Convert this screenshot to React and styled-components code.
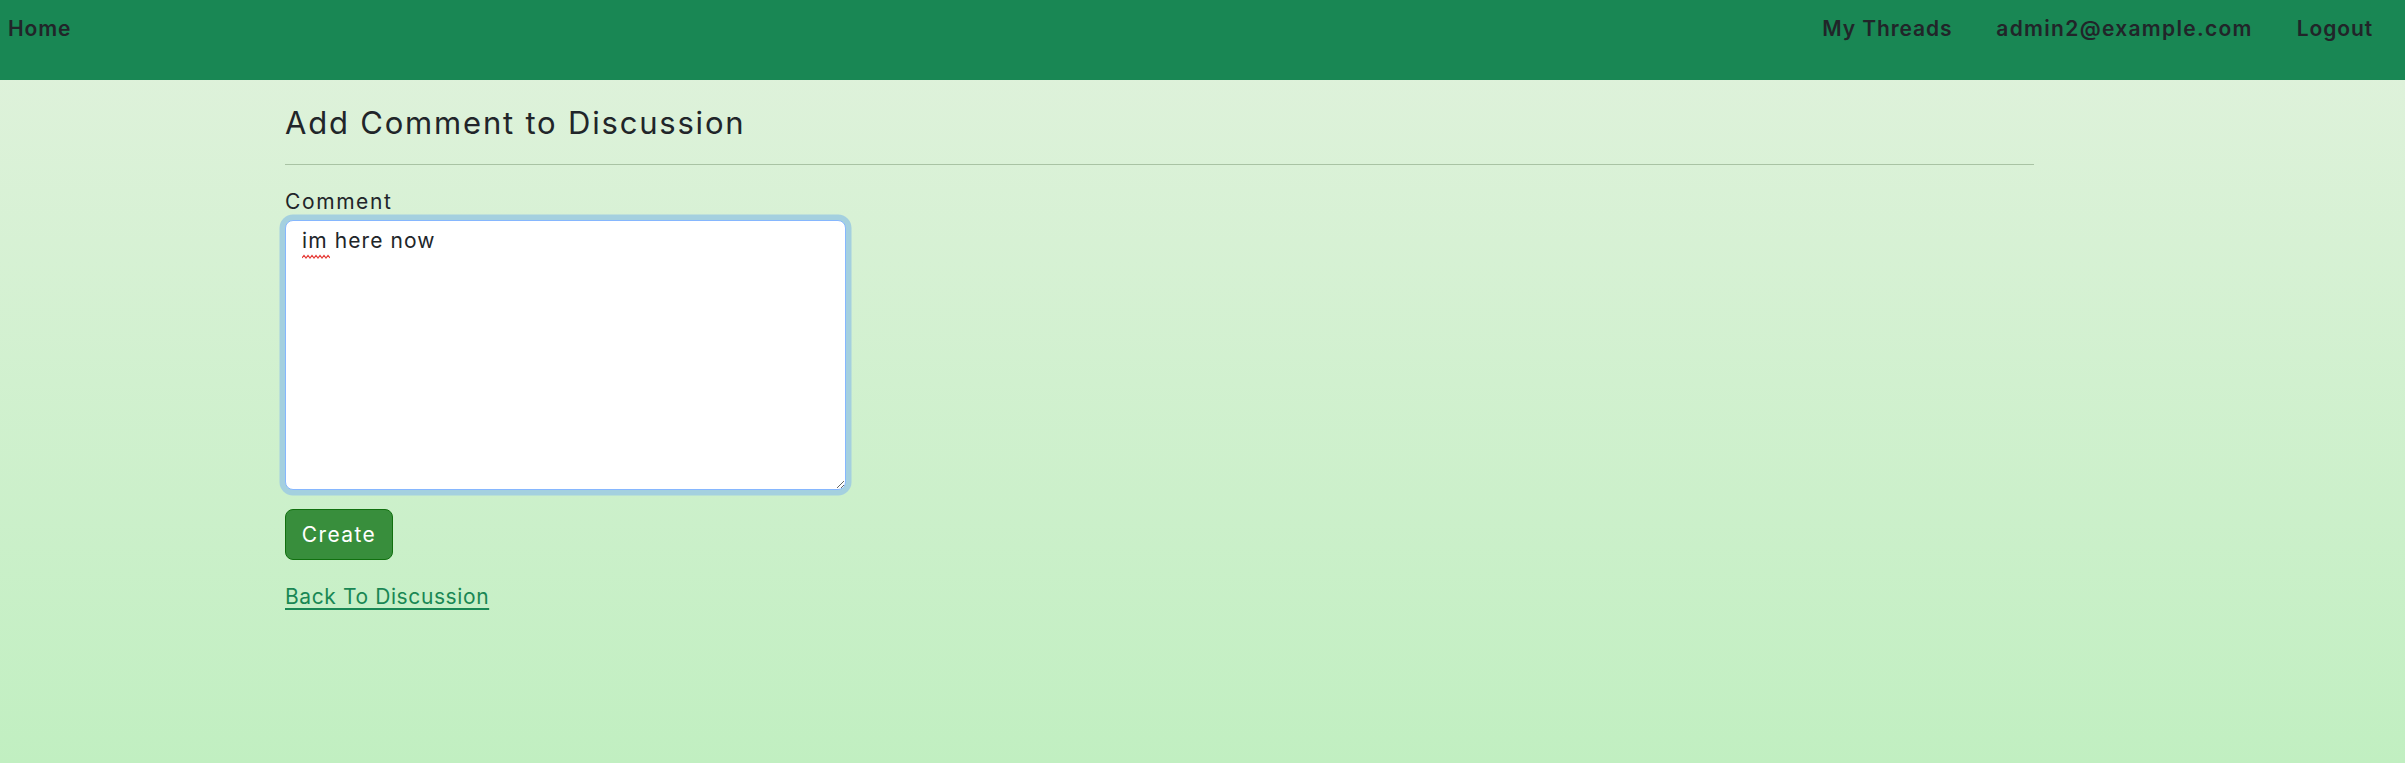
import React from "react";
import styled, { createGlobalStyle } from "styled-components";

const Global = createGlobalStyle`
  html, body { margin: 0; padding: 0; }
  body {
    font-family: Inter, "Open Sans", sans-serif;
    color: #212529;
    min-height: 763px;
    background: #c2efc2;
  }
`;

const Page = styled.div`
  min-height: 763px;
  background: linear-gradient(180deg, #e1f2dd 0%, #c1efc1 100%);
`;

const NavBar = styled.nav`
  height: 80px;
  background: #198754;
  display: flex;
  justify-content: space-between;
  align-items: flex-start;
  padding: 0 32px 0 8px;
  box-sizing: border-box;
`;

const NavGroup = styled.div`
  display: flex;
  gap: ${(p) => p.$gap || 0}px;
`;

const NavLink = styled.a`
  font-family: Inter, sans-serif;
  font-weight: 600;
  font-size: 21px;
  letter-spacing: ${(p) => p.$ls || 0.9}px;
  line-height: 58px;
  color: #212529;
  text-decoration: none;
`;

const Main = styled.main`
  width: 1749px;
  margin-left: 285px;
  padding-top: 24px;
`;

const Title = styled.h3`
  font-family: Inter, sans-serif;
  font-weight: 400;
  font-size: 31px;
  letter-spacing: 1.8px;
  line-height: 38px;
  margin: 0;
  padding-bottom: 22px;
  border-bottom: 1px solid #a9c3a4;
`;

const Form = styled.form`
  margin-top: 22px;
  display: flex;
  flex-direction: column;
  align-items: flex-start;
`;

const Label = styled.label`
  font-size: 21px;
  letter-spacing: 1.6px;
  line-height: 30px;
`;

const FieldWrap = styled.div`
  position: relative;
  margin-top: 3px;
`;

const TextArea = styled.textarea`
  box-sizing: border-box;
  width: 561px;
  height: 270px;
  padding: 4px 16px 8px;
  font-family: Inter, sans-serif;
  font-size: 21px;
  letter-spacing: 1.1px;
  line-height: 32px;
  color: #212529;
  background: #fff;
  border: 1.5px solid #86b7fe;
  border-radius: 8px;
  box-shadow: 0 0 0 5.5px #a4d0df;
  outline: none;
  resize: vertical;
  display: block;
`;

const Squiggle = styled.svg`
  position: absolute;
  left: 17px;
  top: 34px;
  pointer-events: none;
`;

const Button = styled.button`
  margin-top: 19px;
  width: 108px;
  height: 51px;
  background: #388e3c;
  color: #fff;
  border: 1.5px solid #11700f;
  border-radius: 8px;
  font-family: Inter, sans-serif;
  font-size: 21px;
  letter-spacing: 1.4px;
  cursor: pointer;
`;

const BackLink = styled.a`
  margin-top: 24px;
  font-size: 21px;
  letter-spacing: 0.6px;
  color: #198754;
  text-decoration: underline;
  text-underline-offset: 4px;
`;

export default function App() {
  return (
    <Page>
      <Global />
      <NavBar>
        <NavGroup>
          <NavLink href="#">Home</NavLink>
        </NavGroup>
        <NavGroup $gap={44}>
          <NavLink href="#">My Threads</NavLink>
          <NavLink href="#" $ls={1.3}>admin2@example.com</NavLink>
          <NavLink href="#">Logout</NavLink>
        </NavGroup>
      </NavBar>
      <Main>
        <Title>Add Comment to Discussion</Title>
        <Form onSubmit={(e) => e.preventDefault()}>
          <Label htmlFor="comment">Comment</Label>
          <FieldWrap>
            <TextArea id="comment" defaultValue="im here now" spellCheck={false} />
            <Squiggle width="28" height="6" viewBox="0 0 28 6">
              <path d="M0 4 L2 1.5 L4 4 L6 1.5 L8 4 L10 1.5 L12 4 L14 1.5 L16 4 L18 1.5 L20 4 L22 1.5 L24 4 L26 1.5 L28 4" fill="none" stroke="#e53935" strokeWidth="1.2" />
            </Squiggle>
          </FieldWrap>
          <Button type="submit">Create</Button>
          <BackLink href="#">Back To Discussion</BackLink>
        </Form>
      </Main>
    </Page>
  );
}
